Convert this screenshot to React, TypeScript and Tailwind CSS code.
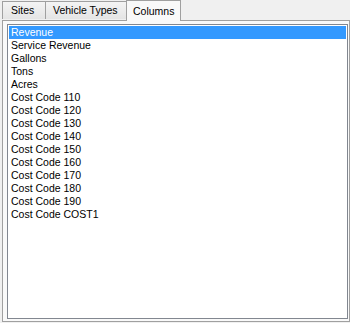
import React from "react";

const items = [
  "Revenue",
  "Service Revenue",
  "Gallons",
  "Tons",
  "Acres",
  "Cost Code 110",
  "Cost Code 120",
  "Cost Code 130",
  "Cost Code 140",
  "Cost Code 150",
  "Cost Code 160",
  "Cost Code 170",
  "Cost Code 180",
  "Cost Code 190",
  "Cost Code COST1",
];

export default function App() {
  return (
    <div
      className="w-[350px] h-[323px] bg-[#f0f0f0] flex flex-col text-[10.5px] text-black"
      style={{ fontFamily: '"Liberation Sans", Arial, sans-serif' }}
    >
      <div className="h-[20px] flex items-end pl-[2px] relative z-10">
        <div className="h-[18px] w-[44px] border-t border-l border-r border-[#a0a0a0] bg-gradient-to-b from-[#f4f4f4] to-[#e4e4e4] flex items-center pl-[8px] leading-none mb-[1px]">
          Sites
        </div>
        <div className="h-[18px] w-[81px] border-t border-r border-[#a0a0a0] bg-gradient-to-b from-[#f4f4f4] to-[#e4e4e4] flex items-center pl-[7px] leading-none mb-[1px]">
          Vehicle Types
        </div>
        <div className="h-[21px] w-[55px] -ml-px border-t border-l border-r border-[#a0a0a0] bg-[#f9f9f9] flex items-center pl-[6px] leading-none -mb-px">
          Columns
        </div>
      </div>
      <div className="ml-[2px] mr-0 mb-px flex-1 border border-[#a0a0a0] bg-[#f9f9f9] pt-[3px] pl-[4px] pr-[1px] pb-[2px] flex">
        <div className="flex-1 border border-[#828790] bg-white pt-px pl-px pr-px">
          {items.map((it, i) => (
            <div
              key={it}
              className={
                "h-[13px] leading-[13px] pl-[2px] whitespace-nowrap " +
                (i === 0 ? "bg-[#3399ff] text-white" : "")
              }
            >
              {it}
            </div>
          ))}
        </div>
      </div>
    </div>
  );
}
